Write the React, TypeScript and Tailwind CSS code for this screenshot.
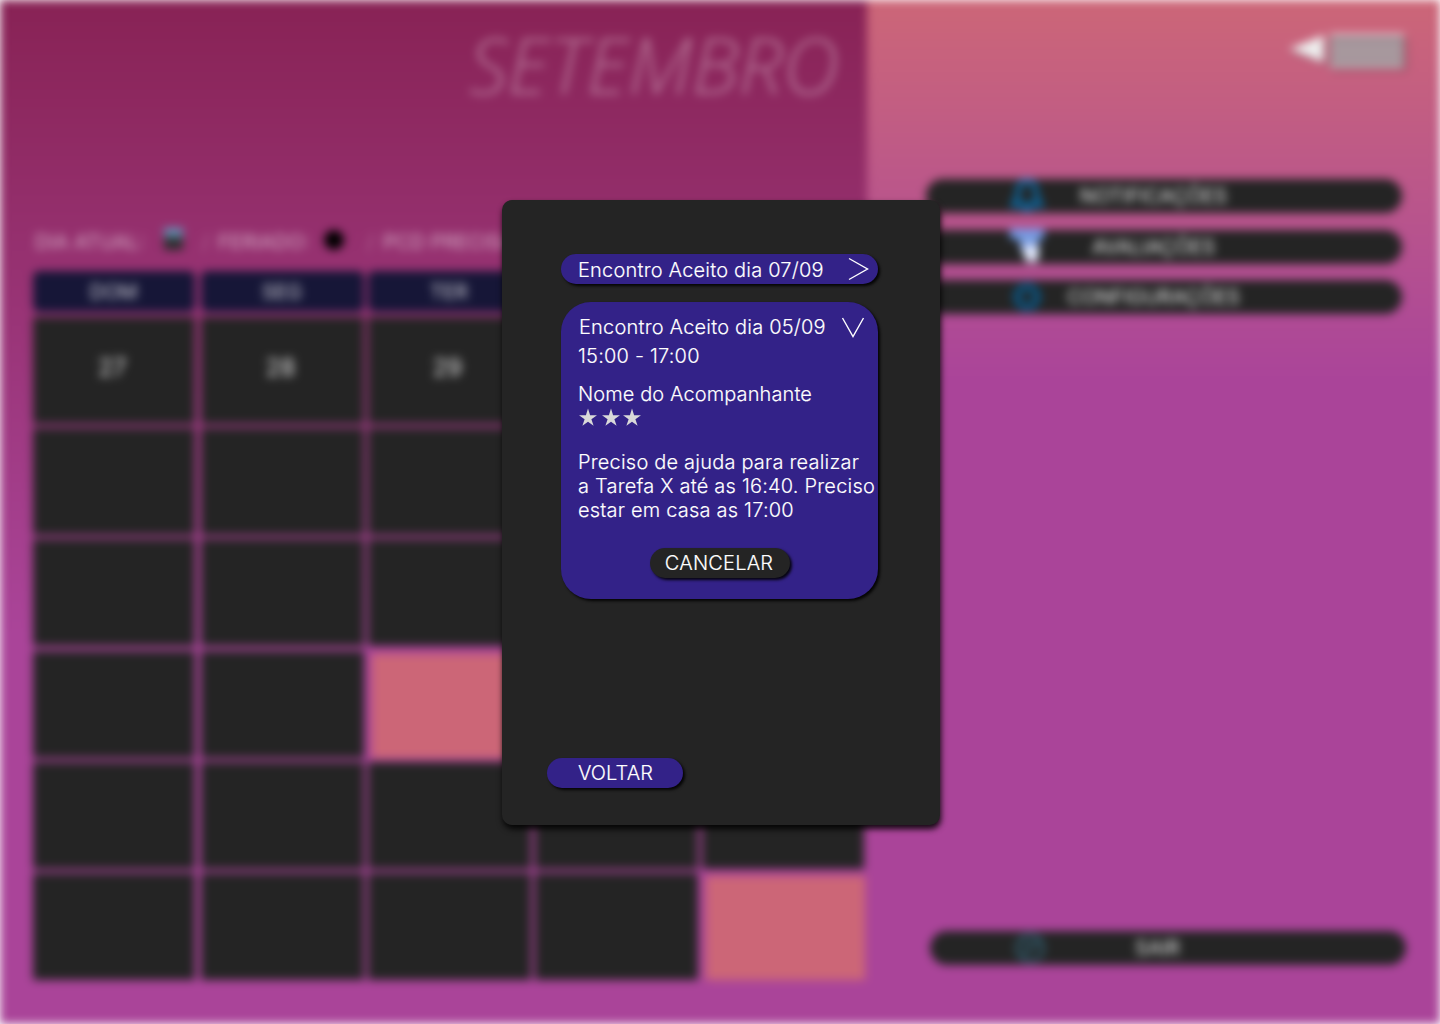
import React from "react";

const days = ["DOM", "SEG", "TER", "QUA", "QUI"];
const dates = ["27", "28", "29"];
const rows = [0, 1, 2, 3, 4, 5];

function Cell({ row, col }: { row: number; col: number }) {
  const coral = (row === 3 && col === 2) || (row === 5 && col === 4);
  return (
    <div
      className={
        "flex items-center justify-center pr-[3px] pb-[6px] " +
        (coral ? "mt-[3px] -mr-px ml-[4px] bg-[#cc6677] " : "bg-[#242424] ") +
        (col === 0 ? "mr-[2px]" : "")
      }
    >
      {row === 0 && <span className="text-[24px] leading-none text-white/85">{dates[col]}</span>}
    </div>
  );
}

function MenuButton({ icon, label }: { icon: React.ReactNode; label: string }) {
  return (
    <div className="flex h-[34px] w-[476px] items-center rounded-full bg-[#242424]">
      <span className="ml-[83px] flex w-[36px] shrink-0 justify-center">{icon}</span>
      <span className="-ml-[1px] w-[220px] text-center text-[20px] text-white/90">{label}</span>
    </div>
  );
}

function BellIcon() {
  return (
    <svg width="34" height="34" viewBox="0 0 34 34">
      <path
        d="M17 2C10 2 8 8 8 14C8 20 6 22 3 26H31C28 22 26 20 26 14C26 8 24 2 17 2Z"
        fill="none"
        stroke="#0b6ba6"
        strokeWidth="5"
      />
      <path d="M12 28H22C22 34 12 34 12 28Z" fill="#0b6ba6" />
    </svg>
  );
}

function PointerIcon() {
  return (
    <svg className="-mt-[6px] -mb-[3px]" width="36" height="38" viewBox="0 0 36 38">
      <rect x="1" y="3" width="34" height="10" fill="#6f9ae6" />
      <path d="M10 10H29L30 24L28 35H20L11 22Z" fill="#7f9fe0" />
      <path d="M15 20H29L30 27L28 36H18L14 27Z" fill="#e6ecff" />
    </svg>
  );
}

function GearIcon() {
  return (
    <svg width="32" height="32" viewBox="0 0 32 32" fill="none" stroke="#0b5480">
      <circle cx="16" cy="16" r="9.5" strokeWidth="6" />
      <circle cx="16" cy="16" r="13.5" strokeWidth="3" strokeDasharray="5.3 5.3" />
    </svg>
  );
}

function ExitIcon() {
  return (
    <svg width="32" height="32" viewBox="0 0 32 32" fill="none" stroke="#34667a" strokeWidth="3">
      <circle cx="15" cy="16" r="13" />
      <path d="M8 24L24 8" />
      <path d="M9 9L14 14" />
    </svg>
  );
}

function Calendar() {
  return (
    <section className="flex h-full w-[867px] flex-col bg-linear-to-b from-[#882255] to-[#aa4499] to-[62%] pl-[33px]">
      <h1 className="mt-[14px] h-[102px] pr-[28px] text-right font-['Open_Sans',sans-serif] text-[78px] leading-[100px] font-light text-white/35 italic">
        SETEMBRO
      </h1>
      <div className="mt-[110px] flex h-[32px] w-[830px] items-center overflow-hidden pl-[2px] text-[20px] whitespace-nowrap text-white/60">
        <span className="w-[129px]">DIA ATUAL:</span>
        <span className="mb-[6px] h-[22px] w-[19px] bg-linear-to-b from-[#6498bc] from-20% to-[#2c2c2c] to-60%" />
        <span className="ml-[19px] w-[16px] text-white/30">/</span>
        <span className="w-[106px]">FERIADO:</span>
        <span className="mb-[5px] size-[20px] rounded-full bg-black" />
        <span className="ml-[23px] w-[16px] text-white/30">/</span>
        <span>PCD PRECISA</span>
      </div>
      <div className="mt-[13px] grid grid-cols-[163.5px_163px_163px_163px_162px] gap-x-[4px]">
        {days.map((d) => (
          <div
            key={d}
            className="flex h-[41px] items-center justify-center rounded-[6px] bg-[#161637] text-[20px] text-white/80 first:mr-[2px]"
          >
            {d}
          </div>
        ))}
      </div>
      <div className="mt-[5px] grid auto-rows-[107px] grid-cols-[163.5px_163px_163px_163px_162px] gap-x-[4px] gap-y-[4.2px]">
        {rows.map((r) => days.map((d, c) => <Cell key={d + r} row={r} col={c} />))}
      </div>
    </section>
  );
}

function Sidebar() {
  return (
    <aside className="flex h-full w-[573px] flex-col bg-linear-to-b from-[#cc6677] to-[#aa4499] to-[37%]">
      <svg className="mt-[28px] ml-[420px]" width="125" height="46" viewBox="0 0 125 46">
        <path d="M3 24L40 12V38Z" fill="#000000" fillOpacity="0.25" />
        <rect x="45" y="10" width="75" height="33" fill="#000000" fillOpacity="0.25" />
        <path d="M2 21L37 7V35Z" fill="#eeeeee" />
        <rect x="43" y="6" width="74" height="34" fill="#75666c" />
        <path d="M43 8H117M43 18H117M43 27.5H117M43 37H117" stroke="#ecdce1" strokeWidth="4" />
      </svg>
      <nav className="mt-[105px] flex flex-col gap-[16.5px] pl-[58.5px]">
        <MenuButton icon={<BellIcon />} label="NOTIFICAÇÕES" />
        <MenuButton icon={<PointerIcon />} label="AVALIAÇÕES" />
        <MenuButton icon={<GearIcon />} label="CONFIGURAÇÕES" />
      </nav>
      <div className="mt-[617px] pl-[62.5px]">
        <MenuButton icon={<ExitIcon />} label="SAIR" />
      </div>
    </aside>
  );
}

const textCls =
  "text-[20px] leading-[24px] font-light tracking-[0.2px] text-white [-webkit-text-stroke:0.15px_white]";
const capsCls =
  "text-[20px] leading-[24px] font-light tracking-[0.1px] text-white [-webkit-text-stroke:0.15px_white]";

const starPath = "M10 0.5L12.1 7.2H19L13.4 11.2L15.6 17.8L10 13.8L4.4 17.8L6.6 11.2L1 7.2H7.9Z";

function Dialog() {
  return (
    <div className="absolute top-[200px] left-[502px] flex h-[625px] w-[438px] flex-col rounded-[10px] bg-[#242424] pt-[54px] pl-[59px] shadow-[1px_4px_6px_rgba(0,0,0,0.9)]">
      <div className="flex h-[30px] w-[317px] items-center justify-between rounded-[15px] bg-[#332288] pr-[9px] pl-[17px] shadow-[2px_2px_3px_rgba(0,0,0,0.9)]">
        <span className={"pt-px " + textCls}>Encontro Aceito dia 07/09</span>
        <svg width="21" height="24" viewBox="0 0 21 24" fill="none" stroke="white" strokeWidth="1.4">
          <path d="M1 1.5L19.5 12L1 22.5" />
        </svg>
      </div>
      <div className="mt-[18px] flex h-[297px] w-[317px] flex-col rounded-[30px] bg-[#332288] pt-[13px] pl-[17px] whitespace-nowrap shadow-[2px_2px_3px_rgba(0,0,0,0.9)]">
        <div className="flex items-center justify-between pr-[13px] pl-px">
          <span className={textCls}>Encontro Aceito dia 05/09</span>
          <svg width="24" height="21" viewBox="0 0 24 21" fill="none" stroke="white" strokeWidth="1.4">
            <path d="M1.5 1L12 19.5L22.5 1" />
          </svg>
        </div>
        <p className={"mt-[5px] " + textCls}>15:00 - 17:00</p>
        <p className={"mt-[14px] " + capsCls}>Nome do Acompanhante</p>
        <svg className="mt-[2px]" width="66" height="20" viewBox="0 0 66 20" fill="#d9d9d9">
          <path d={starPath} />
          <path transform="translate(23 0)" d={starPath} />
          <path transform="translate(44 0)" d={starPath} />
        </svg>
        <p className={"mt-[22px] " + textCls}>
          Preciso de ajuda para realizar
          <br />a Tarefa X até as 16:40. Preciso
          <br />
          estar em casa as 17:00
        </p>
        <button
          className={
            "mt-[26px] ml-[72px] h-[30px] w-[140px] rounded-[15px] bg-[#242424] pr-[2px] shadow-[2px_2px_3px_rgba(0,0,0,0.9)] " +
            textCls
          }
        >
          CANCELAR
        </button>
      </div>
      <button
        className={
          "mt-[159px] -ml-[14px] h-[30px] w-[136px] rounded-[15px] bg-[#332288] pl-px shadow-[2px_2px_3px_rgba(0,0,0,0.9)] " +
          capsCls
        }
      >
        VOLTAR
      </button>
    </div>
  );
}

export default function App() {
  return (
    <div className="relative h-[1024px] w-[1440px] overflow-hidden bg-white font-['Inter',sans-serif]">
      <div className="flex h-full w-full blur-[5px]">
        <Calendar />
        <Sidebar />
      </div>
      <Dialog />
    </div>
  );
}
